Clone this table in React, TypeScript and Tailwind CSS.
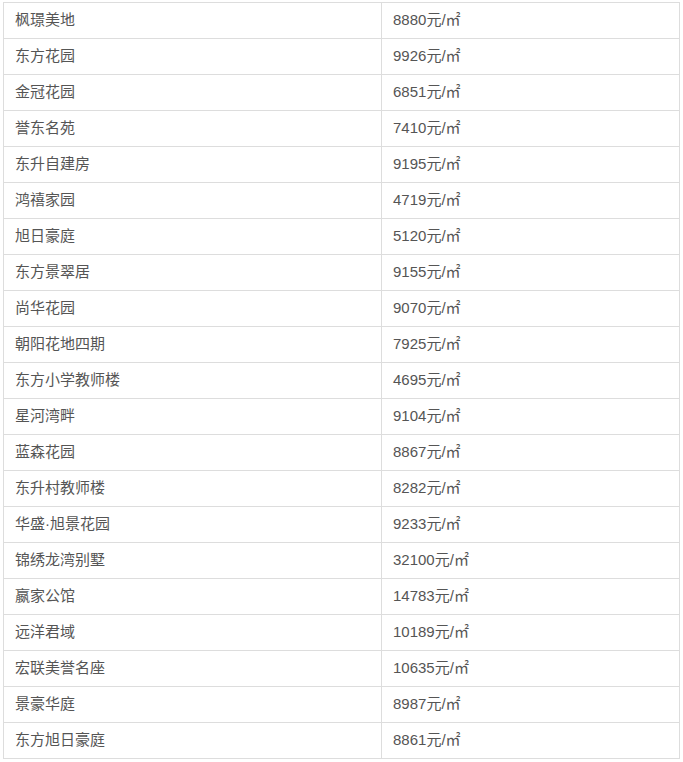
const rows: [string, string][] = [
  ["枫璟美地", "8880"],
  ["东方花园", "9926"],
  ["金冠花园", "6851"],
  ["誉东名苑", "7410"],
  ["东升自建房", "9195"],
  ["鸿禧家园", "4719"],
  ["旭日豪庭", "5120"],
  ["东方景翠居", "9155"],
  ["尚华花园", "9070"],
  ["朝阳花地四期", "7925"],
  ["东方小学教师楼", "4695"],
  ["星河湾畔", "9104"],
  ["蓝森花园", "8867"],
  ["东升村教师楼", "8282"],
  ["华盛·旭景花园", "9233"],
  ["锦绣龙湾别墅", "32100"],
  ["嬴家公馆", "14783"],
  ["远洋君域", "10189"],
  ["宏联美誉名座", "10635"],
  ["景豪华庭", "8987"],
  ["东方旭日豪庭", "8861"],
];

const App = () => {
  return (
    <div className="min-h-screen bg-white pt-[2px] pl-[3px] font-['Liberation_Sans','Noto_Sans_CJK_SC',sans-serif]">
      <table className="w-[677px] border-collapse text-[15px] text-[#555]">
        <tbody>
          {rows.map(([name, price]) => (
            <tr key={name} className="h-[36px]">
              <td className="w-[378px] border border-[#ddd] pl-[11px] align-middle">{name}</td>
              <td className="border border-[#ddd] pl-[11px] align-middle">
                {price}元/㎡
              </td>
            </tr>
          ))}
        </tbody>
      </table>
    </div>
  );
};

export default App;
